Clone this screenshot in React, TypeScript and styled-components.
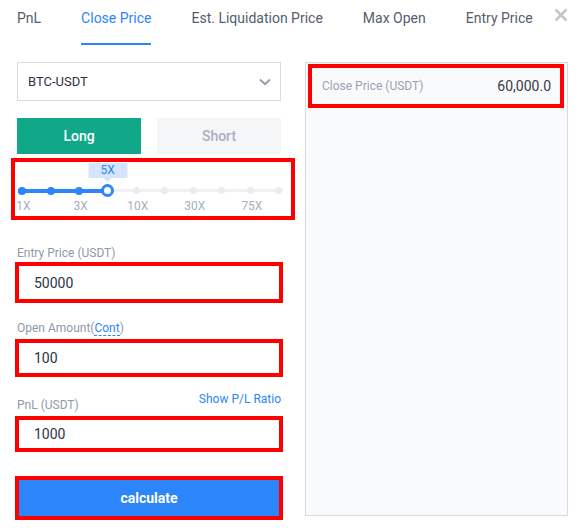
import React from "react";
import styled, { createGlobalStyle } from "styled-components";

const GlobalStyle = createGlobalStyle`
  html, body { margin: 0; padding: 0; background: #ffffff; }
  body { font-family: Roboto, "Liberation Sans", Arial, sans-serif; }
  * { box-sizing: border-box; }
`;

const BLUE = "#2c86f9";
const RED = "#ff0000";

const Page = styled.div`
  width: 586px;
  height: 528px;
  background: #fff;
  overflow: hidden;
`;

const Header = styled.div`
  display: flex;
  align-items: flex-start;
  padding: 0 18px 0 17px;
  height: 45px;
`;

const Tabs = styled.div`
  display: flex;
  gap: 40px;
`;

const Tab = styled.div<{ $active?: boolean }>`
  height: 45px;
  padding-top: 10px;
  font-size: 14px;
  line-height: 16px;
  color: ${(p) => (p.$active ? BLUE : "#535d6d")};
  border-bottom: 2px solid ${(p) => (p.$active ? BLUE : "transparent")};
  white-space: nowrap;
`;

const CloseBtn = styled.div`
  margin-left: auto;
  margin-top: 8px;
  width: 14px;
  height: 14px;
  display: flex;
`;

const Body = styled.div`
  display: flex;
  align-items: flex-start;
  gap: 24px;
  padding-left: 17px;
  margin-top: 17px;
`;

const LeftCol = styled.div`
  width: 264px;
  display: flex;
  flex-direction: column;
`;

const Select = styled.div`
  height: 39px;
  border: 1px solid #d6dae1;
  display: flex;
  align-items: center;
  justify-content: space-between;
  padding: 0 9px 0 10px;
  font-size: 13px;
  color: #2d3344;
`;

const SideSwitch = styled.div`
  margin-top: 17px;
  display: flex;
  gap: 16px;
`;

const SideBtn = styled.div<{ $active?: boolean }>`
  flex: 1;
  height: 36px;
  display: flex;
  align-items: center;
  justify-content: center;
  font-size: 14px;
  font-weight: 500;
  background: ${(p) => (p.$active ? "#11a88a" : "#f5f6f8")};
  color: ${(p) => (p.$active ? "#ffffff" : "#a9b1bd")};
`;

const SliderBox = styled.div`
  margin: 4px -14px 0 -6px;
  height: 62px;
  border: 4px solid ${RED};
  padding: 22px 8px 0 3px;
  display: flex;
  flex-direction: column;
  gap: 2px;
`;

const DotsRow = styled.div<{ $fill: number }>`
  height: 13px;
  display: flex;
  justify-content: space-between;
  align-items: center;
  background:
    linear-gradient(${BLUE}, ${BLUE}) left center / ${(p) => p.$fill}% 4px no-repeat,
    linear-gradient(#eff1f4, #eff1f4) left center / 100% 3px no-repeat;
`;

const DotSlot = styled.div`
  width: 8px;
  height: 13px;
  display: flex;
  align-items: center;
  justify-content: center;
  position: relative;
`;

const Dot = styled.div<{ $on?: boolean }>`
  flex: none;
  width: ${(p) => (p.$on ? 8 : 7)}px;
  height: ${(p) => (p.$on ? 8 : 7)}px;
  border-radius: 50%;
  background: ${(p) => (p.$on ? BLUE : "#e8ebf0")};
`;

const Handle = styled.div`
  flex: none;
  width: 13px;
  height: 13px;
  border-radius: 50%;
  border: 3px solid ${BLUE};
  background: #fff;
`;

const Tip = styled.div`
  position: absolute;
  bottom: 19px;
  left: 50%;
  transform: translateX(-50%);
  width: 39px;
  height: 15px;
  background: #d4e5fd;
  color: ${BLUE};
  font-size: 12px;
  line-height: 15px;
  text-align: center;
  &::after {
    content: "";
    position: absolute;
    left: 50%;
    top: 15px;
    margin-left: -4px;
    border-left: 4px solid transparent;
    border-right: 4px solid transparent;
    border-top: 4px solid #d4e5fd;
  }
`;

const LabelsRow = styled.div`
  display: flex;
  justify-content: space-between;
  height: 14px;
`;

const MarkSlot = styled.div`
  width: 8px;
  display: flex;
  justify-content: center;
  font-size: 12px;
  line-height: 14px;
  color: #a7afbc;
  white-space: nowrap;
  padding-left: 3px;
`;

const Label = styled.div<{ $top: number }>`
  margin-top: ${(p) => p.$top}px;
  font-size: 12px;
  line-height: 14px;
  color: #8f99a8;
  white-space: nowrap;
`;

const Unit = styled.span`
  color: ${BLUE};
  border-bottom: 1px dashed ${BLUE};
`;

const LabelRow = styled.div`
  margin-top: 15px;
  display: flex;
  justify-content: space-between;
  align-items: flex-start;
`;

const RatioLink = styled.div`
  font-size: 12px;
  line-height: 14px;
  color: ${BLUE};
`;

const Input = styled.div<{ $h: number; $top: number }>`
  margin: ${(p) => p.$top}px -2px 0 -2px;
  height: ${(p) => p.$h}px;
  border: 4px solid ${RED};
  background: #fff;
  display: flex;
  align-items: center;
  padding-left: 15px;
  font-size: 14px;
  color: #2d3344;
`;

const CalcWrap = styled.div`
  margin: 24px -2px 0 -2px;
  height: 44px;
  border: 4px solid ${RED};
  display: flex;
`;

const CalcBtn = styled.div`
  flex: 1;
  background: ${BLUE};
  color: #fff;
  font-size: 14px;
  font-weight: 700;
  display: flex;
  align-items: center;
  justify-content: center;
`;

const ResultPanel = styled.div`
  width: 263px;
  height: 454px;
  border: 1px solid #d6dae1;
  background: #f9fafc;
  padding: 1px 3px 0 2px;
`;

const ResultRow = styled.div`
  height: 44px;
  border: 4px solid ${RED};
  display: flex;
  align-items: center;
  justify-content: space-between;
  padding: 0 9px 0 10px;
`;

const ResultKey = styled.span`
  font-size: 12px;
  color: #9aa3b1;
`;

const ResultVal = styled.span`
  font-size: 14px;
  color: #353b4b;
`;

const marks: Record<number, string> = { 0: "1X", 2: "3X", 4: "10X", 6: "30X", 8: "75X" };
const current = 3;

export default function App() {
  const tabs = ["PnL", "Close Price", "Est. Liquidation Price", "Max Open", "Entry Price"];
  const points = Array.from({ length: 10 }, (_, i) => i);
  return (
    <Page>
      <GlobalStyle />
      <Header>
        <Tabs>
          {tabs.map((t) => (
            <Tab key={t} $active={t === "Close Price"}>
              {t}
            </Tab>
          ))}
        </Tabs>
        <CloseBtn>
          <svg width="14" height="14" viewBox="0 0 14 14">
            <path d="M1.5 1.5 L12.5 12.5 M12.5 1.5 L1.5 12.5" stroke="#c3c7ce" strokeWidth="2.6" strokeLinecap="butt" />
          </svg>
        </CloseBtn>
      </Header>
      <Body>
        <LeftCol>
          <Select>
            <span>BTC-USDT</span>
            <svg width="12" height="8" viewBox="0 0 12 8">
              <path d="M1 1.5 L6 6.2 L11 1.5" fill="none" stroke="#9099a8" strokeWidth="1.8" />
            </svg>
          </Select>
          <SideSwitch>
            <SideBtn $active>Long</SideBtn>
            <SideBtn>Short</SideBtn>
          </SideSwitch>
          <SliderBox>
            <DotsRow $fill={34}>
              {points.map((i) => (
                <DotSlot key={i}>
                  {i === current ? (
                    <>
                      <Handle />
                      <Tip>5X</Tip>
                    </>
                  ) : (
                    <Dot $on={i < current} />
                  )}
                </DotSlot>
              ))}
            </DotsRow>
            <LabelsRow>
              {points.map((i) => (
                <MarkSlot key={i}>{marks[i] ?? ""}</MarkSlot>
              ))}
            </LabelsRow>
          </SliderBox>
          <Label $top={26}>Entry Price (USDT)</Label>
          <Input $h={41} $top={2}>50000</Input>
          <Label $top={18}>
            Open Amount(<Unit>Cont</Unit>)
          </Label>
          <Input $h={38} $top={4}>100</Input>
          <LabelRow>
            <Label $top={6}>PnL (USDT)</Label>
            <RatioLink>Show P/L Ratio</RatioLink>
          </LabelRow>
          <Input $h={36} $top={4}>1000</Input>
          <CalcWrap>
            <CalcBtn>calculate</CalcBtn>
          </CalcWrap>
        </LeftCol>
        <ResultPanel>
          <ResultRow>
            <ResultKey>Close Price (USDT)</ResultKey>
            <ResultVal>60,000.0</ResultVal>
          </ResultRow>
        </ResultPanel>
      </Body>
    </Page>
  );
}
